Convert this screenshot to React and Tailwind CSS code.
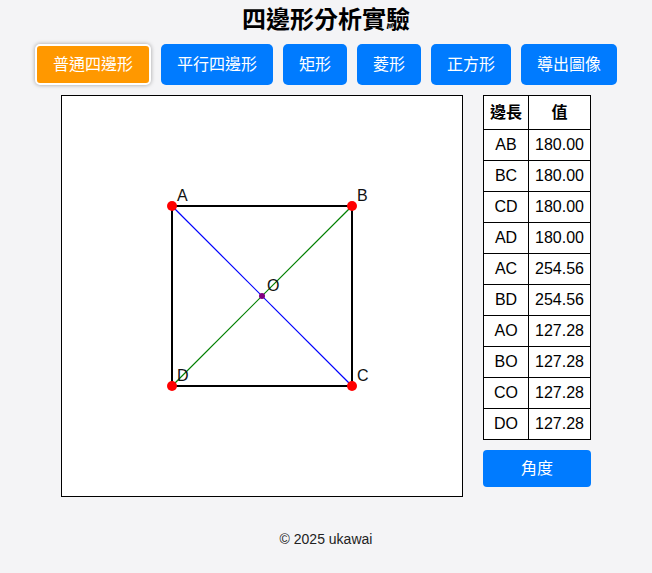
import React, { useState } from "react";

const SHAPES = ["普通四邊形", "平行四邊形", "矩形", "菱形", "正方形"];

const POINTS = {
  A: [110, 110],
  B: [290, 110],
  C: [290, 290],
  D: [110, 290],
};

const LENGTHS = [
  ["AB", "180.00"],
  ["BC", "180.00"],
  ["CD", "180.00"],
  ["AD", "180.00"],
  ["AC", "254.56"],
  ["BD", "254.56"],
  ["AO", "127.28"],
  ["BO", "127.28"],
  ["CO", "127.28"],
  ["DO", "127.28"],
];

function Board() {
  const { A, B, C, D } = POINTS;
  const O = [(A[0] + C[0]) / 2, (A[1] + C[1]) / 2];
  const poly = [A, B, C, D].map((p) => p.join(",")).join(" ");

  return (
    <svg width="400" height="400" className="block bg-white border border-black box-content">
      <polygon points={poly} fill="none" stroke="#000" strokeWidth="2" />
      <line x1={A[0]} y1={A[1]} x2={C[0]} y2={C[1]} stroke="#0000ff" strokeWidth="1.2" />
      <line x1={B[0]} y1={B[1]} x2={D[0]} y2={D[1]} stroke="#008000" strokeWidth="1.2" />
      {Object.entries(POINTS).map(([name, [x, y]]) => (
        <g key={name}>
          <circle cx={x} cy={y} r="5" fill="#ff0000" />
          <text x={x + 5} y={y - 5} fontSize="16" fill="#111" fontFamily="'Liberation Sans', Arial, sans-serif">
            {name}
          </text>
        </g>
      ))}
      <circle cx={O[0]} cy={O[1]} r="3" fill="#800080" />
      <text x={O[0] + 5} y={O[1] - 5} fontSize="16" fill="#111" fontFamily="'Liberation Sans', Arial, sans-serif">
        O
      </text>
    </svg>
  );
}

export default function App() {
  const [active, setActive] = useState(0);

  return (
    <div className="min-h-screen bg-[#f4f4f6] text-black font-['Liberation_Sans','Noto_Sans_CJK_TC',sans-serif] pt-1">
      <h1 className="text-2xl leading-8 font-bold text-center">四邊形分析實驗</h1>

      <div className="flex justify-center gap-2.5 mt-2">
        {SHAPES.map((s, i) =>
          i === active ? (
            <button
              key={s}
              onClick={() => setActive(i)}
              className="bg-[#ff9800] text-white text-base leading-[21px] px-4 py-2 border-2 border-white rounded-[5px] shadow-[0_0_4px_rgba(0,0,0,0.35)]"
            >
              {s}
            </button>
          ) : (
            <button
              key={s}
              onClick={() => setActive(i)}
              className="bg-[#007bff] text-white text-base leading-[21px] px-4 py-2.5 rounded-[5px]"
            >
              {s}
            </button>
          )
        )}
        <button className="bg-[#007bff] text-white text-base leading-[21px] px-4 py-2.5 rounded-[5px]">
          導出圖像
        </button>
      </div>

      <div className="flex justify-center items-start gap-5 mt-2.5">
        <Board />
        <div className="flex flex-col w-[108px]">
          <table className="border-collapse bg-white text-base">
            <thead>
              <tr>
                <th className="border border-black px-1.5 py-1.5 leading-[21px]">邊長</th>
                <th className="border border-black px-1.5 py-1.5 leading-[21px]">值</th>
              </tr>
            </thead>
            <tbody>
              {LENGTHS.map(([k, v]) => (
                <tr key={k}>
                  <td className="border border-black px-1.5 py-1.5 leading-[18px] text-center">{k}</td>
                  <td className="border border-black px-1.5 py-1.5 leading-[18px] text-center">{v}</td>
                </tr>
              ))}
            </tbody>
          </table>
          <button className="mt-2.5 bg-[#007bff] text-white text-base leading-[21px] py-2 rounded-[4px]">
            角度
          </button>
        </div>
      </div>

      <footer className="text-center text-sm leading-5 text-[#222] mt-8">© 2025 ukawai</footer>
    </div>
  );
}
